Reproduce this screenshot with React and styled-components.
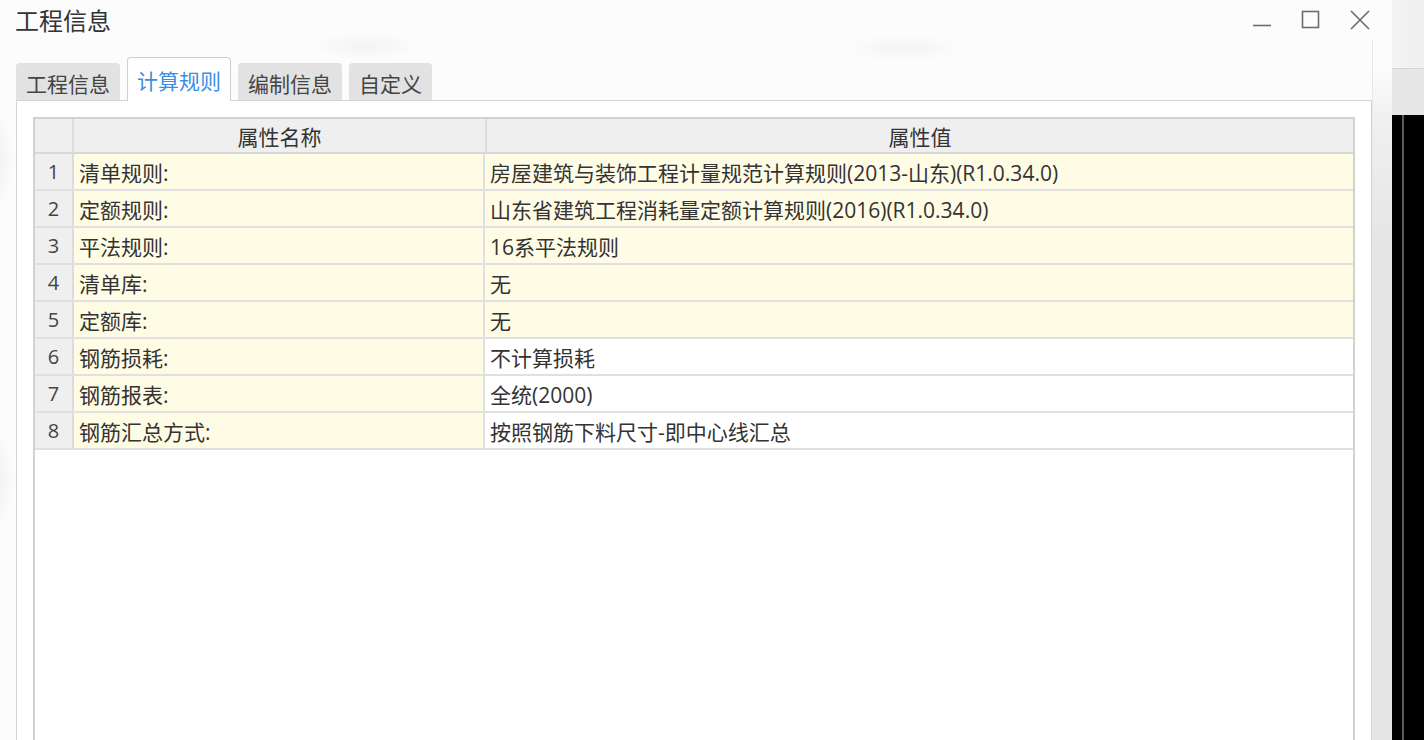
import styled, { createGlobalStyle } from "styled-components";

const GlobalStyle = createGlobalStyle`
	html, body {
		margin: 0;
		padding: 0;
		background: #f2f2f2;
	}
	body {
		font-family: "Open Sans", "Noto Sans CJK SC", sans-serif;
		color: #333;
	}
`;

const rows = [
	{ name: "清单规则:", value: "房屋建筑与装饰工程计量规范计算规则(2013-山东)(R1.0.34.0)", locked: true },
	{ name: "定额规则:", value: "山东省建筑工程消耗量定额计算规则(2016)(R1.0.34.0)", locked: true },
	{ name: "平法规则:", value: "16系平法规则", locked: true },
	{ name: "清单库:", value: "无", locked: true },
	{ name: "定额库:", value: "无", locked: true },
	{ name: "钢筋损耗:", value: "不计算损耗" },
	{ name: "钢筋报表:", value: "全统(2000)" },
	{ name: "钢筋汇总方式:", value: "按照钢筋下料尺寸-即中心线汇总" },
];

const tabs = ["工程信息", "计算规则", "编制信息", "自定义"];

const App = () => {
	return (
		<Screen>
			<GlobalStyle />
			<Dialog>
				{/* title bar */}
				<TitleBar>
					<Title>工程信息</Title>
					<Controls>
						<CtrlBtn aria-label='minimize'>
							<svg width='20' height='20' viewBox='0 0 20 20'>
								<path d='M1 15.5h18' stroke='#6b6b6b' strokeWidth='1.6' />
							</svg>
						</CtrlBtn>
						<CtrlBtn aria-label='maximize'>
							<svg width='20' height='20' viewBox='0 0 20 20'>
								<rect x='1.5' y='1.5' width='16' height='16' fill='none' stroke='#6b6b6b' strokeWidth='1.6' />
							</svg>
						</CtrlBtn>
						<CtrlBtn aria-label='close'>
							<svg width='20' height='20' viewBox='0 0 20 20'>
								<path d='M1 1l18 18M19 1L1 19' stroke='#6b6b6b' strokeWidth='1.6' />
							</svg>
						</CtrlBtn>
					</Controls>
				</TitleBar>

				<Body>
					<Content>
						<TabStrip>
							{tabs.map((t) => (
								<Tab key={t} $active={t === "计算规则"}>
									{t}
								</Tab>
							))}
						</TabStrip>

						<Panel>
							<Grid>
								<HeadRow>
									<NumCell $head />
									<HeadCell $w='411px'>属性名称</HeadCell>
									<HeadCell $last>属性值</HeadCell>
								</HeadRow>
								{rows.map((r, i) => (
									<Row key={r.name}>
										<NumCell>{i + 1}</NumCell>
										<Cell $w='411px' $yellow>
											{r.name}
										</Cell>
										<Cell $last $yellow={r.locked}>
											{r.value}
										</Cell>
									</Row>
								))}
							</Grid>
						</Panel>
					</Content>
					<Gutter />
				</Body>
			</Dialog>

			{/* app window behind the dialog */}
			<Behind>
				<BehindTop />
				<BehindBar />
				<BehindDark>
					<DarkLine />
				</BehindDark>
			</Behind>
		</Screen>
	);
};

const Screen = styled.div`
	width: 1424px;
	height: 740px;
	display: flex;
	overflow: hidden;
`;

const Dialog = styled.div`
	width: 1392px;
	height: 740px;
	display: flex;
	flex-direction: column;
	background:
		radial-gradient(ellipse 55px 14px at 365px 46px, rgba(0, 0, 0, 0.035), transparent),
		radial-gradient(ellipse 60px 14px at 905px 48px, rgba(0, 0, 0, 0.035), transparent),
		radial-gradient(ellipse 14px 50px at 0px 160px, rgba(0, 0, 0, 0.04), transparent),
		radial-gradient(ellipse 14px 50px at 0px 480px, rgba(0, 0, 0, 0.04), transparent),
		#fcfcfc;
`;

const TitleBar = styled.div`
	height: 40px;
	display: flex;
	align-items: center;
	justify-content: space-between;
	padding: 0 22px 0 15px;
`;

const Title = styled.div`
	font-size: 24px;
	color: #333;
	margin-top: -1px;
`;

const Controls = styled.div`
	display: flex;
	align-items: center;
	gap: 29px;
`;

const CtrlBtn = styled.button`
	width: 20px;
	height: 20px;
	padding: 0;
	border: none;
	background: transparent;
	display: flex;
	align-items: center;
	justify-content: center;
`;

const Body = styled.div`
	flex: 1;
	display: flex;
	min-height: 0;
`;

const Content = styled.div`
	flex: 1;
	display: flex;
	flex-direction: column;
	padding-left: 16px;
`;

const Gutter = styled.div`
	width: 19px;
	background: linear-gradient(#fbfbfb 30px, #f0f0f0 80px, #e4e4e4 220px);
	border-left: 1px solid #e8e8e8;
`;

const TabStrip = styled.div`
	height: 60px;
	display: flex;
	align-items: flex-end;
	gap: 7px;
	position: relative;
	z-index: 1;
`;

const Tab = styled.div`
	height: ${(p) => (p.$active ? "44px" : "37px")};
	padding: 0 9px;
	box-sizing: border-box;
	display: flex;
	align-items: center;
	font-size: 21px;
	color: ${(p) => (p.$active ? "#3a8ee6" : "#444")};
	background: ${(p) => (p.$active ? "#fff" : "#e2e2e2")};
	border: 1px solid ${(p) => (p.$active ? "#cfcfcf" : "#e2e2e2")};
	border-bottom: none;
	border-radius: 4px 4px 0 0;
	margin-bottom: ${(p) => (p.$active ? "-1px" : "0")};
	padding-top: ${(p) => (p.$active ? "0" : "1px")};
`;

const Panel = styled.div`
	flex: 1;
	display: flex;
	flex-direction: column;
	background: #fff;
	border: 1px solid #d4d4d4;
	border-bottom: none;
	padding: 16px 16px 0 16px;
	min-height: 0;
`;

const Grid = styled.div`
	flex: 1;
	border: 2px solid #d2d2d2;
	border-bottom: none;
	background: #fff;
	display: flex;
	flex-direction: column;
`;

const HeadRow = styled.div`
	height: 33px;
	display: flex;
	background: #efefef;
	border-bottom: 2px solid #d8d8d8;
`;

const Row = styled.div`
	height: 35px;
	display: flex;
	border-bottom: 2px solid #e0e0e0;
`;

const NumCell = styled.div`
	width: 37px;
	flex: none;
	display: flex;
	align-items: center;
	justify-content: center;
	background: #efefef;
	border-right: 2px solid #dcdcdc;
	font-size: 20px;
	color: #444;
`;

const HeadCell = styled.div`
	width: ${(p) => p.$w || "auto"};
	flex: ${(p) => (p.$w ? "none" : "1")};
	display: flex;
	align-items: center;
	justify-content: center;
	font-size: 21px;
	color: #333;
	border-right: ${(p) => (p.$last ? "none" : "2px solid #dcdcdc")};
`;

const Cell = styled.div`
	width: ${(p) => p.$w || "auto"};
	flex: ${(p) => (p.$w ? "none" : "1")};
	display: flex;
	align-items: center;
	padding-left: 5px;
	box-sizing: border-box;
	font-size: 21px;
	color: #333;
	white-space: nowrap;
	background: ${(p) => (p.$yellow ? "#fffce6" : "#fff")};
	border-right: ${(p) => (p.$last ? "none" : "2px solid #e0e0e0")};
`;

const Behind = styled.div`
	flex: 1;
	display: flex;
	flex-direction: column;
	box-shadow: inset 2px 0 3px rgba(0, 0, 0, 0.06);
`;

const BehindTop = styled.div`
	height: 68px;
	background: linear-gradient(90deg, #f4f4f4, #efefef);
`;

const BehindBar = styled.div`
	height: 46px;
	background: #e7e7e7;
	border-top: 1px solid #d4d4d4;
`;

const BehindDark = styled.div`
	flex: 1;
	background: #000;
	padding-left: 10px;
`;

const DarkLine = styled.div`
	height: 100%;
	width: 2px;
	background: #5a5a5a;
`;

export default App;
